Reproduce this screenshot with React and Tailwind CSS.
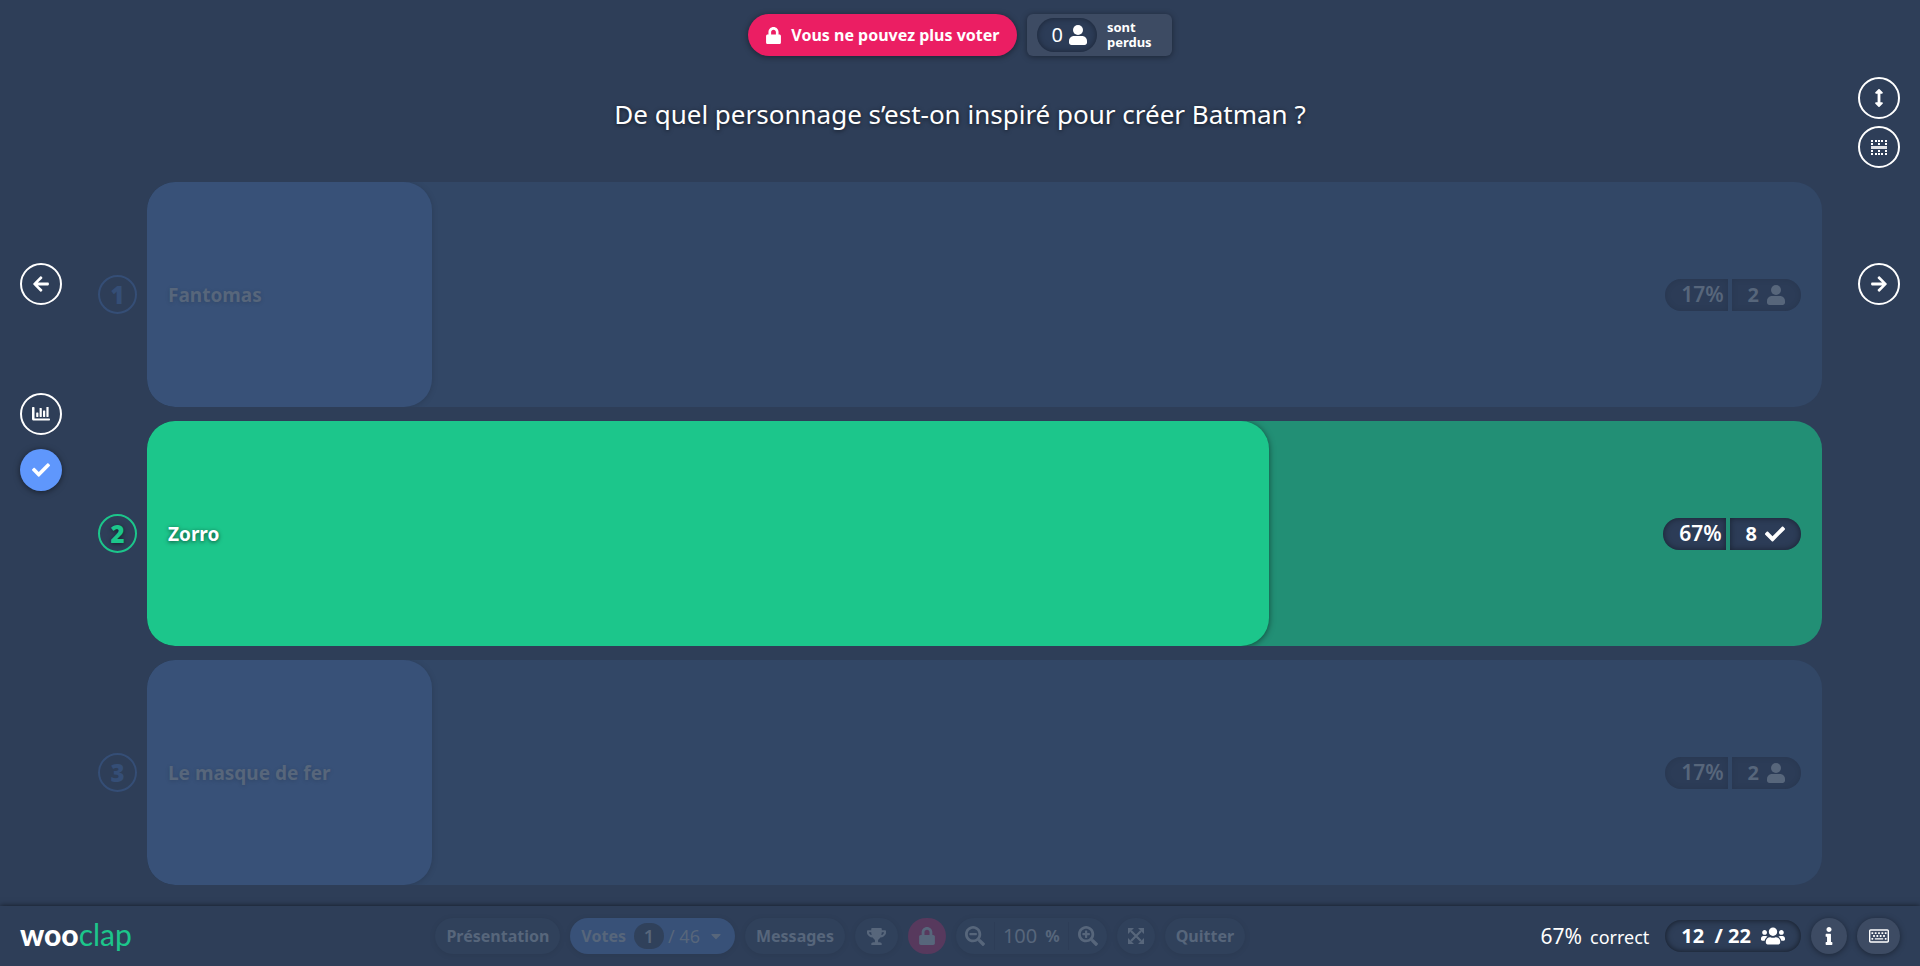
import React from "react";
import {
  FaLock, FaCheck, FaTrophy, FaSearchMinus, FaSearchPlus, FaInfo, FaUsers,
  FaRegKeyboard, FaArrowsAltV, FaArrowLeft, FaArrowRight, FaCaretDown,
} from "react-icons/fa";

const answers = [
  { id: 1, label: "Fantomas", percent: 17, votes: 2, correct: false },
  { id: 2, label: "Zorro", percent: 67, votes: 8, correct: true },
  { id: 3, label: "Le masque de fer", percent: 17, votes: 2, correct: false },
];

function UserIcon({ className = "" }) {
  return (
    <svg viewBox="0 0 18 20" fill="currentColor" className={className} aria-hidden="true">
      <circle cx="9" cy="5" r="5" />
      <path d="M5 11h8c2.8 0 5 2.2 5 5v1.5c0 1.4-1.1 2.5-2.5 2.500h-13C1.100 20 0 18.900 0 17.500V16c0-2.800 2.200-5 5-5z" />
    </svg>
  );
}

function ChartIcon({ className = "" }) {
  return (
    <svg viewBox="0 0 18 14" fill="currentColor" className={className} aria-hidden="true">
      <path d="M0 .7C0 .3.300 0 .7 0h1.100c.4 0 .7.300.7.700V11.500h14.800c.4 0 .7.300.7.700v.6c0 .4-.3.700-.7.700H1.500C.7 13.500 0 12.800 0 12z" />
      <rect x="4.200" y="5.500" width="2.200" height="4.500" rx=".4" />
      <rect x="7.600" y="1" width="2.200" height="9" rx=".4" />
      <rect x="11" y="3.500" width="2.200" height="6.500" rx=".4" />
      <rect x="14.400" y="0" width="2.200" height="10" rx=".4" />
    </svg>
  );
}

function TableIcon({ className = "" }) {
  return (
    <svg viewBox="0 0 16 15" fill="currentColor" className={className} aria-hidden="true">
      {[0, 4, 7, 10, 14].map((x) => (
        <g key={x}>
          <rect x={x} y="0" width="2" height="2" />
          <rect x={x} y="13" width="2" height="2" />
        </g>
      ))}
      {[0, 7, 14].map((x) => (
        <g key={x}>
          <rect x={x} y="3" width="2" height="2" />
          <rect x={x} y="10" width="2" height="2" />
        </g>
      ))}
      <rect x="0" y="6" width="16" height="3" opacity=".85" />
    </svg>
  );
}

function ExpandIcon({ className = "" }) {
  return (
    <svg viewBox="0 0 16 16" className={className} aria-hidden="true">
      <path d="M3 3l10 10M13 3L3 13" stroke="currentColor" strokeWidth="2.200" />
      <path d="M0 0h6L0 6zM16 0v6l-6-6zM0 16v-6l6 6zM16 16h-6l6-6z" fill="currentColor" />
    </svg>
  );
}

function RoundButton({ label, active, children }) {
  return (
    <button
      type="button"
      aria-label={label}
      className={
        "flex size-[42px] shrink-0 items-center justify-center rounded-full text-white " +
        (active
          ? "bg-[#5f97fc] shadow-[0_1px_6px_rgba(0,0,0,0.5)]"
          : "border-2 border-white")
      }
    >
      {children}
    </button>
  );
}

function Answer({ id, label, percent, votes, correct }) {
  const chip = "flex h-8 items-center bg-[#2c3c57] " +
    (correct ? "shadow-[inset_0_0_6px_rgba(0,0,0,0.45)]" : "shadow-[inset_0_0_6px_rgba(0,0,0,0.1)]");
  return (
    <li className="flex flex-1 items-center gap-2.5">
      <span
        className={
          "flex size-[39px] shrink-0 items-center justify-center rounded-full border-2 text-2xl font-black " +
          (correct
            ? "border-[#1cc68b] text-[#1cc68b] [text-shadow:0_1px_4px_rgba(0,0,0,0.5)]"
            : "border-[#354e76] text-[#354e76]")
        }
      >
        {id}
      </span>
      <div
        className={
          "relative flex flex-1 items-center justify-between self-stretch overflow-hidden rounded-[28px] px-[21px] " +
          (correct ? "bg-[#228f75] text-white" : "bg-[#324766] text-[#57667b]")
        }
      >
        <div
          className={
            "absolute inset-y-0 left-0 rounded-[28px] " +
            (correct
              ? "bg-[#1cc68b] shadow-[0_1px_6px_rgba(0,0,0,0.5)]"
              : "bg-[#385178] shadow-[0_1px_6px_rgba(0,0,0,0.15)]")
          }
          style={{ width: `${percent}%` }}
        />
        <span
          className={
            "relative pt-0.5 text-[19px] font-bold " +
            (correct ? "[text-shadow:0_1px_4px_rgba(0,0,0,0.6)]" : "[text-shadow:0_1px_4px_rgba(0,0,0,0.15)]")
          }
        >
          {label}
        </span>
        <div className="relative flex gap-1">
          <span className={chip + " rounded-l-full pl-4 pr-1 text-[21px] font-semibold"}>{percent}%</span>
          <span className={chip + " gap-2 rounded-r-full pl-4 pr-4 text-xl font-bold"}>
            {votes}
            {correct ? <FaCheck className="size-5" /> : <UserIcon className="h-5 w-[18px]" />}
          </span>
        </div>
      </div>
    </li>
  );
}

function BarButton({ label, className = "", children }) {
  return (
    <button
      type="button"
      aria-label={label}
      className={"flex h-9 items-center justify-center rounded-full font-bold " + className}
    >
      {children}
    </button>
  );
}

export default function App() {
  const dim = "bg-[#30415b] shadow-[0_1px_6px_rgba(0,0,0,0.08)] ";
  const lit = "bg-[#3d4b63] shadow-[0_1px_6px_rgba(0,0,0,0.4)] ";
  return (
    <div className="flex min-h-screen flex-col bg-[#2e3e58] font-['Noto_Sans',sans-serif] text-base text-white">
      <header className="flex h-[70px] items-center justify-center gap-2.5">
        <div className="flex h-[42px] items-center gap-2.5 rounded-full bg-[#eb1e63] px-[18px] font-bold shadow-[0_1px_6px_rgba(0,0,0,0.45)]">
          <FaLock className="h-[17px] w-[15px]" />
          Vous ne pouvez plus voter
        </div>
        <div className="flex h-[42px] items-center gap-2.5 rounded-md bg-[#3d4b63] pl-2.5 pr-5 shadow-[0_1px_6px_rgba(0,0,0,0.4)]">
          <span className="flex h-[34px] items-center gap-1.5 rounded-full bg-[#2c3c57] pl-3.5 pr-2.5 text-xl shadow-[inset_0_0_6px_rgba(0,0,0,0.4)]">
            0
            <UserIcon className="h-5 w-[18px]" />
          </span>
          <span className="flex flex-col text-[13px] font-bold leading-[15px]">
            <span>sont</span>
            <span>perdus</span>
          </span>
        </div>
      </header>

      <main className="flex flex-1 pb-[21px]">
        <nav aria-label="Affichage" className="flex w-[98px] shrink-0 flex-col items-start pl-5 pt-[193px]">
          <RoundButton label="Question précédente"><FaArrowLeft className="size-[18px]" /></RoundButton>
          <div className="flex flex-col gap-3.5 pt-[88px]">
            <RoundButton label="Résultats"><ChartIcon className="h-3.5 w-[18px]" /></RoundButton>
            <RoundButton label="Bonne réponse" active><FaCheck className="size-[18px]" /></RoundButton>
          </div>
        </nav>

        <section className="flex flex-1 flex-col">
          <h1 className="flex h-[112px] items-start justify-center pt-[22px] text-[26px] leading-[44px] [text-shadow:0_1px_4px_rgba(0,0,0,0.6)]">
            De quel personnage s’est-on inspiré pour créer Batman ?
          </h1>
          <ol className="flex flex-1 flex-col gap-3.5">
            {answers.map((a) => (
              <Answer key={a.id} {...a} />
            ))}
          </ol>
        </section>

        <nav aria-label="Options" className="flex w-[98px] shrink-0 flex-col items-end pr-5 pt-[7px]">
          <div className="flex flex-col gap-[7px]">
            <RoundButton label="Ajuster la hauteur"><FaArrowsAltV className="size-[18px]" /></RoundButton>
            <RoundButton label="Disposition"><TableIcon className="h-[15px] w-4" /></RoundButton>
          </div>
          <div className="pt-[95px]">
            <RoundButton label="Question suivante"><FaArrowRight className="size-[18px]" /></RoundButton>
          </div>
        </nav>
      </main>

      <footer className="flex h-[60px] items-center justify-between px-5 shadow-[0_0_6px_rgba(0,0,0,0.6)]">
        <a href="#accueil" className="w-[120px] pb-1 font-[Lato,sans-serif] text-[30px] leading-8">
          <span className="font-black">woo</span>
          <span className="text-[#1cc68b]">clap</span>
        </a>

        <div className="flex gap-2.5 text-[#57667b]">
          <BarButton className={dim + "px-[11px]"}>Présentation</BarButton>
          <BarButton className="gap-2 bg-[#385178] px-[11px] shadow-[0_1px_6px_rgba(0,0,0,0.08)]">
            Votes
            <span className="flex items-center gap-1 text-lg font-normal">
              <span className="flex h-[26px] w-[30px] items-center justify-center rounded-full bg-[#30415b] font-semibold">1</span>
              / 46
            </span>
            <FaCaretDown className="size-4" />
          </BarButton>
          <BarButton className={dim + "px-[11px]"}>Messages</BarButton>
          <BarButton label="Classement" className={dim + "w-[43px]"}><FaTrophy className="size-[19px]" /></BarButton>
          <BarButton label="Verrouiller les votes" className="w-[38px] bg-[#57395d]"><FaLock className="h-[18px] w-4" /></BarButton>
          <div className={dim + "flex h-9 items-center rounded-full"}>
            <button type="button" aria-label="Zoom arrière" className="flex w-[38px] justify-center"><FaSearchMinus className="size-5" /></button>
            <span className="flex items-center gap-2 border-x border-[#2d3d57] px-2 text-xl">
              100 <b className="text-base">%</b>
            </span>
            <button type="button" aria-label="Zoom avant" className="flex w-[38px] justify-center"><FaSearchPlus className="size-5" /></button>
          </div>
          <BarButton label="Plein écran" className={dim + "w-[38px]"}><ExpandIcon className="size-4" /></BarButton>
          <BarButton className={dim + "px-[11px]"}>Quitter</BarButton>
        </div>

        <div className="flex items-center gap-2.5">
          <p className="flex items-baseline gap-2 pr-1.5 text-lg"><span className="text-[21px]">67%</span>correct</p>
          <p className="flex h-8 items-center gap-2.5 rounded-full px-4 text-xl font-bold shadow-[inset_0_0_6px_rgba(0,0,0,0.6)]">
            <span>12&nbsp; / 22</span>
            <FaUsers className="size-6" />
          </p>
          <BarButton label="Informations" className={lit + "w-9"}><FaInfo className="size-[18px]" /></BarButton>
          <BarButton label="Raccourcis clavier" className={lit + "w-[43px]"}><FaRegKeyboard className="size-5" /></BarButton>
        </div>
      </footer>
    </div>
  );
}
